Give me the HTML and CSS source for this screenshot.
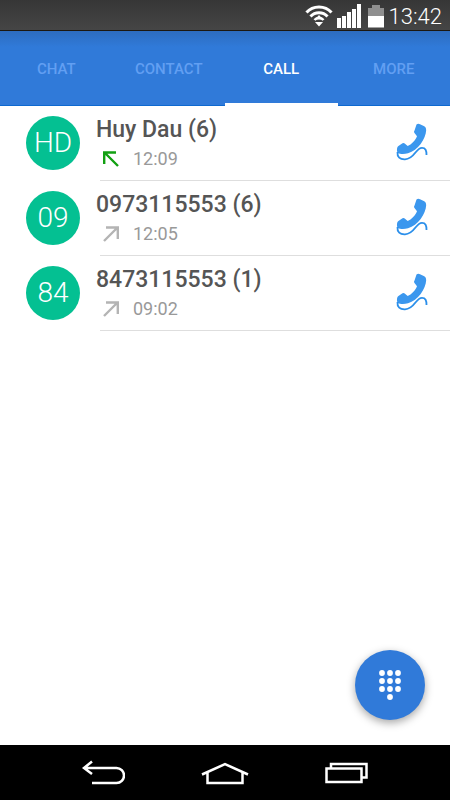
FILE: index.html
```html
<!DOCTYPE html>
<html lang="en">
<head>
    <meta charset="UTF-8">
    <meta name="viewport" content="width=device-width, initial-scale=1.0">
    <title>Call History</title>
    <link rel="stylesheet" href="styles.css">
</head>
<body>

    <!-- Shared icons -->
    <svg class="icon-defs" aria-hidden="true">
        <symbol id="phone" viewBox="0 0 32 40">
            <path fill="#3b97ee" d="M20.5 1.5Q22 .4 24 1.2L28.300 3.200Q30.300 4.200 30.200 7C29.800 16 22 27.500 12 30.300C8 31.400 4 31.200 2 30C.8 29 .7 26.500 1.300 24.500Q1.700 23.500 2.800 22.800L6.500 20.200Q7.700 19.500 8.700 20.400L11.700 23C15.500 21.500 19.500 17.500 21 13.300L18.300 9.800Q17.600 8.800 18.500 7.500Z"/>
            <path fill="none" stroke="#2b8fea" stroke-width="1.800" d="M1.500 29C1 34 4 36.500 9 36.300C19 36 19.500 24.800 26 24.800C29.500 24.800 30.600 27.500 30.500 32"/>
        </symbol>
        <symbol id="arrow-out" viewBox="0 0 16 16">
            <path fill="none" stroke="#b4b4b4" stroke-width="2.400" d="M1 15L14 2M3 1.500H14.800V13"/>
        </symbol>
        <symbol id="arrow-in" viewBox="0 0 16 16">
            <path fill="none" stroke="#12a012" stroke-width="2.400" d="M15 15L2 2M13 1.500H1.200V13"/>
        </symbol>
    </svg>

    <div class="status-bar">
        <svg width="28" height="22" viewBox="0 0 28 22" fill="none" stroke="#fff">
            <path stroke-width="3" d="M1.500 7.500C8 0 20 0 26.500 7.500"/>
            <path stroke-width="3" d="M5.500 11.500C10 6.500 18 6.500 22.500 11.500"/>
            <path stroke-width="2.500" d="M9.500 15C12 12 16 12 18.500 15"/>
            <path fill="#fff" stroke="none" d="M14 10L18 14.500H10ZM10 17H18L14 21.500Z"/>
        </svg>
        <svg width="26" height="24" viewBox="0 0 26 24" fill="#fff">
            <path d="M1 14h4v10H1zM6 12h4v12H6zM11 8h4v16h-4zM16 5h4v19h-4zM21 0h4v24h-4z"/>
        </svg>
        <svg class="battery" width="16" height="24" viewBox="0 0 16 24">
            <path fill="#8f8f8f" d="M4 1h8v3h4v8H0V4h4z"/>
            <path fill="#fff" d="M0 12h16v11.500H0z"/>
        </svg>
        <time>13:42</time>
    </div>

    <nav class="tabs">
        <a href="#chat">CHAT</a>
        <a href="#contact">CONTACT</a>
        <a href="#call" class="active">CALL</a>
        <a href="#more">MORE</a>
    </nav>

    <main>
        <ul class="call-list">
            <li class="call-item">
                <div class="avatar">HD</div>
                <div class="call-info">
                    <div class="call-name">Huy Dau (6)</div>
                    <div class="call-time">
                        <svg width="16" height="16"><use href="#arrow-in"/></svg>
                        <time>12:09</time>
                    </div>
                </div>
                <button class="call-button" aria-label="Call Huy Dau">
                    <svg width="32" height="40"><use href="#phone"/></svg>
                </button>
            </li>
            <li class="call-item">
                <div class="avatar">09</div>
                <div class="call-info">
                    <div class="call-name">0973115553 (6)</div>
                    <div class="call-time">
                        <svg width="16" height="16"><use href="#arrow-out"/></svg>
                        <time>12:05</time>
                    </div>
                </div>
                <button class="call-button" aria-label="Call 0973115553">
                    <svg width="32" height="40"><use href="#phone"/></svg>
                </button>
            </li>
            <li class="call-item">
                <div class="avatar">84</div>
                <div class="call-info">
                    <div class="call-name">8473115553 (1)</div>
                    <div class="call-time">
                        <svg width="16" height="16"><use href="#arrow-out"/></svg>
                        <time>09:02</time>
                    </div>
                </div>
                <button class="call-button" aria-label="Call 8473115553">
                    <svg width="32" height="40"><use href="#phone"/></svg>
                </button>
            </li>
        </ul>

        <button class="dial-button" aria-label="Open dial pad">
            <svg width="24" height="32" viewBox="0 0 24 32" fill="#fff">
                <circle cx="4" cy="4" r="2.900"/><circle cx="12" cy="4" r="2.900"/><circle cx="20" cy="4" r="2.900"/>
                <circle cx="4" cy="12" r="2.900"/><circle cx="12" cy="12" r="2.900"/><circle cx="20" cy="12" r="2.900"/>
                <circle cx="4" cy="20" r="2.900"/><circle cx="12" cy="20" r="2.900"/><circle cx="20" cy="20" r="2.900"/>
                <circle cx="12" cy="28" r="2.900"/>
            </svg>
        </button>
    </main>

    <footer class="nav-bar">
        <button aria-label="Back">
            <svg width="44" height="26" viewBox="0 0 44 26">
                <path d="M11 1.500L3 8L11 14M3 8H35.500A7.500 7.500 0 0 1 35.500 23H11"/>
            </svg>
        </button>
        <button aria-label="Home">
            <svg width="48" height="26" viewBox="0 0 48 26">
                <path d="M1 14.500L24 4L47 14.500M6.500 12V23H41.500V12"/>
            </svg>
        </button>
        <button aria-label="Recent apps">
            <svg width="44" height="26" viewBox="0 0 44 26">
                <path d="M1.500 8.500H36.500V22H1.500ZM6 8V4H41.500V17.500H37"/>
            </svg>
        </button>
    </footer>

</body>
</html>
```

FILE: styles.css
```css
* {
    box-sizing: border-box;
}
body {
    font-family: Roboto, sans-serif;
    margin: 0;
    min-height: 100vh;
    display: flex;
    flex-direction: column;
    background: #fff;
}
svg {
    display: block;
}
button {
    padding: 0;
    border: none;
    background: none;
    cursor: pointer;
}
.icon-defs {
    position: absolute;
    width: 0;
    height: 0;
}

/* Status bar */
.status-bar {
    display: flex;
    align-items: center;
    justify-content: flex-end;
    gap: 3px;
    height: 31px;
    padding: 2px 8px 0 0;
    background: linear-gradient(#363636, #454545);
    border-bottom: 1px solid #1c1710;
    color: #fff;
    font-size: 22px;
    font-weight: 300;
}
.battery {
    margin: 0 2px 0 3px;
}

/* Tabs */
.tabs {
    display: grid;
    grid-template-columns: repeat(4, 1fr);
    height: 75px;
    background: linear-gradient(#2d6cbf, #307ad9 16px);
    border-bottom: 1px solid #0e69d0;
}
.tabs a {
    display: flex;
    align-items: center;
    justify-content: center;
    padding-top: 4px;
    border-bottom: 3px solid transparent;
    color: #629ff2;
    font-size: 15px;
    font-weight: 500;
    text-decoration: none;
}
.tabs .active {
    color: #fff;
    border-bottom-color: #fff;
    margin-bottom: -1px;
}

/* Call list */
main {
    flex: 1;
    position: relative;
}
.call-list {
    list-style: none;
    margin: 0;
    padding: 0;
}
.call-item {
    display: flex;
    align-items: center;
    height: 75px;
    padding: 0 22px 2px 26px;
    background: linear-gradient(#dedede, #dedede) 100px 100% / 100% 1px no-repeat;
}
.avatar {
    width: 54px;
    height: 54px;
    border-radius: 50%;
    background: #04c092;
    color: #fff;
    font-size: 28px;
    font-weight: 300;
    line-height: 54px;
    text-align: center;
}
.call-info {
    flex: 1;
    margin-left: 16px;
}
.call-name {
    color: #555;
    font-size: 23px;
    font-weight: 500;
    line-height: 32px;
}
.call-time {
    display: flex;
    align-items: center;
    gap: 14px;
    padding-left: 7px;
    color: #999;
    font-size: 18px;
    line-height: 26px;
}

/* Dial pad button */
.dial-button {
    position: absolute;
    right: 25px;
    bottom: 25px;
    display: flex;
    align-items: center;
    justify-content: center;
    width: 70px;
    height: 70px;
    border-radius: 50%;
    background: #307ad9;
    box-shadow: 0 3px 8px rgba(0, 0, 0, 0.35);
}

/* Navigation bar */
.nav-bar {
    display: flex;
    align-items: center;
    justify-content: center;
    gap: 76px;
    height: 55px;
    background: #000;
}
.nav-bar svg {
    fill: none;
    stroke: #fff;
    stroke-width: 2.5;
}
```
